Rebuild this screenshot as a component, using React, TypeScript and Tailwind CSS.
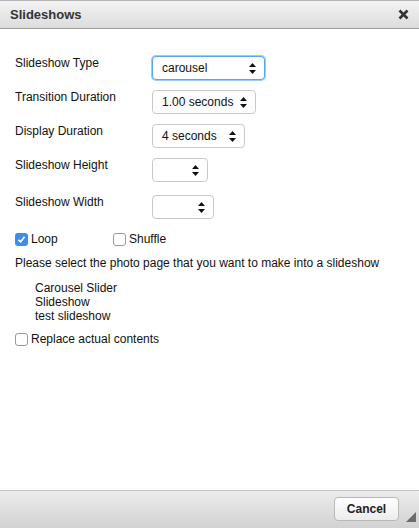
import React from "react";

const FONT = { fontFamily: '"Liberation Sans", Arial, sans-serif' };

function Arrows() {
  return (
    <svg width="7" height="11" viewBox="0 0 7 11" className="shrink-0">
      <path d="M3.5 0 L7 4 L0 4 Z" fill="#111" />
      <path d="M0 7 L7 7 L3.5 11 Z" fill="#111" />
    </svg>
  );
}

function FakeSelect({
  value,
  width,
  focused,
}: {
  value: string;
  width: string;
  focused?: boolean;
}) {
  return (
    <div
      className={`${width} h-[24px] flex items-center justify-between pl-[9px] pr-[8px] bg-white rounded-[4px] text-[12px] text-[#111] ${
        focused
          ? "border border-[#5ba4f0] shadow-[0_0_0_1px_#9cc9f7]"
          : "border border-[#c9c9c9]"
      }`}
    >
      <span>{value}</span>
      <Arrows />
    </div>
  );
}

function Checkbox({ checked }: { checked?: boolean }) {
  if (checked) {
    return (
      <div className="w-[13px] h-[13px] rounded-[3px] bg-[#3d8ee8] flex items-center justify-center shrink-0">
        <svg width="9" height="9" viewBox="0 0 9 9">
          <path d="M1.5 4.8 L3.6 6.8 L7.6 1.8" stroke="#fff" strokeWidth="1.7" fill="none" />
        </svg>
      </div>
    );
  }
  return <div className="w-[13px] h-[13px] rounded-[3px] border border-[#9a9a9a] bg-white shrink-0" />;
}

const rows = [
  { label: "Slideshow Type", value: "carousel", width: "w-[113px]", focused: true, mt: "" },
  { label: "Transition Duration", value: "1.00 seconds", width: "w-[104px]", mt: "mt-[10px]" },
  { label: "Display Duration", value: "4 seconds", width: "w-[93px]", mt: "mt-[10px]" },
  { label: "Slideshow Height", value: "", width: "w-[56px]", mt: "mt-[10px]" },
  { label: "Slideshow Width", value: "", width: "w-[62px]", mt: "mt-[13px]" },
];

export default function App() {
  return (
    <div style={FONT} className="w-[419px] h-[528px] flex flex-col bg-white text-[#111] overflow-hidden">
      {/* header */}
      <div className="h-[29px] shrink-0 flex items-center justify-between pl-[10px] pr-[10px] border-t border-[#b5b5b5] border-b border-b-[#9e9e9e] bg-gradient-to-b from-[#f3f3f3] to-[#dcdcdc]">
        <span className="text-[13px] font-bold text-[#333]">Slideshows</span>
        <svg width="11" height="11" viewBox="0 0 11 11">
          <path d="M1.5 1.5 L9.5 9.5 M9.5 1.5 L1.5 9.5" stroke="#333" strokeWidth="2.6" />
        </svg>
      </div>

      {/* body */}
      <div className="flex-1 pl-[15px] pt-[27px] text-[12px]">
        {rows.map((r) => (
          <div key={r.label} className={`flex items-start ${r.mt}`}>
            <div className="w-[137px] leading-[14px]">{r.label}</div>
            <FakeSelect value={r.value} width={r.width} focused={r.focused} />
          </div>
        ))}

        <div className="flex items-center mt-[13px] h-[14px]">
          <div className="flex items-center gap-[3px] w-[98px]">
            <Checkbox checked />
            <span>Loop</span>
          </div>
          <div className="flex items-center gap-[3px]">
            <Checkbox />
            <span>Shuffle</span>
          </div>
        </div>

        <p className="mt-[10px] leading-[14px]">
          Please select the photo page that you want to make into a slideshow
        </p>

        <ul className="mt-[11px] pl-[20px] leading-[14px]">
          <li>Carousel Slider</li>
          <li>Slideshow</li>
          <li>test slideshow</li>
        </ul>

        <div className="flex items-center gap-[3px] mt-[9px] h-[14px]">
          <Checkbox />
          <span>Replace actual contents</span>
        </div>
      </div>

      {/* footer */}
      <div className="h-[38px] shrink-0 relative border-t border-[#c4c4c4] bg-gradient-to-b from-[#ececec] to-[#d2d2d2] flex items-start justify-end pr-[20px] pt-[6px]">
        <button className="w-[65px] h-[24px] rounded-[4px] border border-[#b9b9b9] bg-gradient-to-b from-[#ffffff] to-[#ececec] text-[12px] font-bold text-[#222]">
          Cancel
        </button>
        <svg width="10" height="10" viewBox="0 0 10 10" className="absolute right-[3px] bottom-[6px]">
          <path d="M10 0 L10 10 L0 10 Z" fill="#6b6b6b" />
        </svg>
      </div>
    </div>
  );
}
